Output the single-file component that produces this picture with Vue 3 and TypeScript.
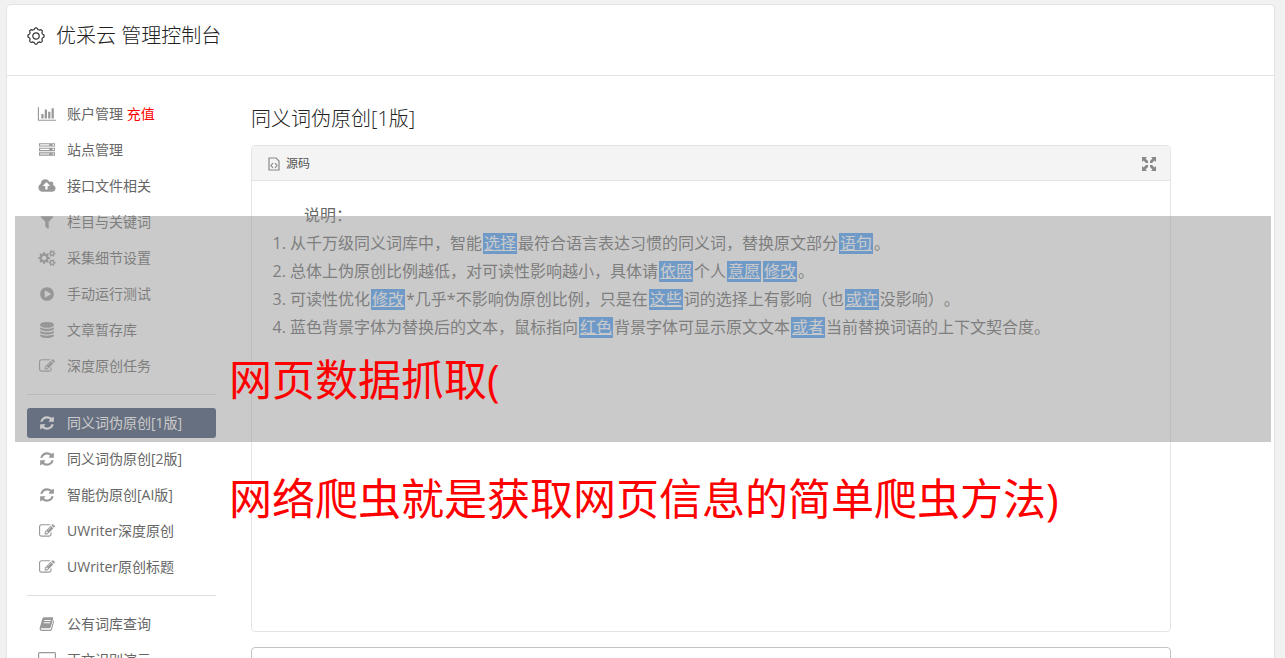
<script setup lang="ts">
interface MenuItem {
  label: string
  extra?: string
  icon: string
  active?: boolean
}
interface Piece {
  text: string
  mark?: boolean
}

const pencil =
  'M888 1184l116-116-152-152-116 116v56h96v96h56zm440-720q-16-16-33 1l-350 350q-17 17-1 33t33-1l350-350q17-17 1-33zm80 594v190q0 119-84.5 203.5t-203.5 84.5h-832q-119 0-203.5-84.5t-84.5-203.5v-832q0-119 84.5-203.5t203.5-84.5h832q63 0 117 25 15 7 18 23 3 17-9 29l-49 49q-14 14-32 8-23-6-45-6h-832q-66 0-113 47t-47 113v832q0 66 47 113t113 47h832q66 0 113-47t47-113v-126q0-13 9-22l64-64q15-15 35-7t20 29zm-96-738l288 288-672 672h-288v-288zm444 132l-92 92-288-288 92-92q28-28 68-28t68 28l152 152q28 28 28 68t-28 68z'

const icons: Record<string, { box: string; path: string }> = {
  chart: {
    box: '0 0 2048 1792',
    path: 'M640 896v512h-256v-512h256zm384-512v1024h-256v-1024h256zm1024 1152v128h-2048v-1536h128v1408h1920zm-640-896v768h-256v-768h256zm384-384v1152h-256v-1152h256z',
  },
  server: {
    box: '0 0 1792 1792',
    path: 'M128 1408h1024v-128h-1024v128zm0-512h1024v-128h-1024v128zm1568 448q0-40-28-68t-68-28-68 28-28 68 28 68 68 28 68-28 28-68zm-1568-960h1024v-128h-1024v128zm1568 448q0-40-28-68t-68-28-68 28-28 68 28 68 68 28 68-28 28-68zm0-512q0-40-28-68t-68-28-68 28-28 68 28 68 68 28 68-28 28-68zm96 832v384h-1792v-384h1792zm0-512v384h-1792v-384h1792zm0-512v384h-1792v-384h1792z',
  },
  cloud: {
    box: '0 0 1920 1792',
    path: 'M1280 864q0-14-9-23l-352-352q-9-9-23-9t-23 9l-351 351q-10 12-10 24 0 14 9 23t23 9h224v352q0 13 9.5 22.5t22.5 9.5h192q13 0 22.5-9.5t9.5-22.5v-352h224q13 0 22.5-9.5t9.5-22.5zm640 288q0 159-112.5 271.5t-271.5 112.5h-1088q-185 0-316.5-131.5t-131.5-316.5q0-130 70-240t188-165q-2-30-2-43 0-212 150-362t362-150q156 0 285.5 87t188.5 231q71-62 166-62 106 0 181 75t75 181q0 76-41 138 130 31 213.5 135.5t83.5 238.5z',
  },
  filter: {
    box: '0 0 1792 1792',
    path: 'M1595 295q17 41-14 70l-493 493v742q0 42-39 59-13 5-25 5-27 0-45-19l-256-256q-19-19-19-45v-486l-493-493q-31-29-14-70 17-39 59-39h1280q42 0 59 39z',
  },
  cogs: {
    box: '0 0 1920 1792',
    path: 'M896 896q0-106-75-181t-181-75-181 75-75 181 75 181 181 75 181-75 75-181zm768 512q0-52-38-90t-90-38-90 38-38 90q0 53 37.5 90.5t90.5 37.5 90.5-37.5 37.5-90.5zm0-1024q0-52-38-90t-90-38-90 38-38 90q0 53 37.5 90.5t90.5 37.5 90.5-37.5 37.5-90.5zm-384 421v185q0 10-7 19.5t-16 10.5l-155 24q-11 35-32 76 34 48 90 115 7 11 7 20 0 12-7 19-23 30-82.5 89.5t-78.5 59.5q-11 0-21-7l-115-90q-37 19-77 31-11 108-23 155-7 24-30 24h-186q-11 0-20-7.5t-10-17.5l-23-153q-34-10-75-31l-118 89q-7 7-20 7-11 0-21-8-144-133-144-160 0-9 7-19 10-14 41-53t47-61q-23-44-35-82l-152-24q-10-1-17-9.5t-7-19.5v-185q0-10 7-19.5t16-10.5l155-24q11-35 32-76-34-48-90-115-7-11-7-20 0-12 7-20 22-30 82-89t79-59q11 0 21 7l115 90q34-18 77-32 11-108 23-154 7-24 30-24h186q11 0 20 7.5t10 17.5l23 153q34 10 75 31l118-89q8-7 20-7 11 0 21 8 144 133 144 160 0 8-7 19-12 16-42 54t-45 60q23 48 34 82l152 23q10 2 17 10.5t7 19.5zm640 533v140q0 16-149 31-12 27-30 52 51 113 51 138 0 4-4 7-122 71-124 71-8 0-46-47t-52-68q-20 2-30 2t-30-2q-14 21-52 68t-46 47q-2 0-124-71-4-3-4-7 0-25 51-138-18-25-30-52-149-15-149-31v-140q0-16 149-31 13-29 30-52-51-113-51-138 0-4 4-7 4-2 35-20t59-34 30-16q8 0 46 46.5t52 67.5q20-2 30-2t30 2q51-71 92-112l6-2q4 0 124 70 4 3 4 7 0 25-51 138 17 23 30 52 149 15 149 31zm0-1024v140q0 16-149 31-12 27-30 52 51 113 51 138 0 4-4 7-122 71-124 71-8 0-46-47t-52-68q-20 2-30 2t-30-2q-14 21-52 68t-46 47q-2 0-124-71-4-3-4-7 0-25 51-138-18-25-30-52-149-15-149-31v-140q0-16 149-31 13-29 30-52-51-113-51-138 0-4 4-7 4-2 35-20t59-34 30-16q8 0 46 46.5t52 67.5q20-2 30-2t30 2q51-71 92-112l6-2q4 0 124 70 4 3 4 7 0 25-51 138 17 23 30 52 149 15 149 31z',
  },
  play: {
    box: '0 0 1792 1792',
    path: 'M896 128q209 0 385.5 103t279.5 279.5 103 385.5-103 385.5-279.5 279.5-385.5 103-385.5-103-279.5-279.5-103-385.5 103-385.5 279.5-279.5 385.5-103zm384 823q32-18 32-55t-32-55l-544-320q-31-19-64-1-32 19-32 56v640q0 37 32 56 16 8 32 8 17 0 32-9z',
  },
  database: {
    box: '0 0 1792 1792',
    path: 'M896 768q237 0 443-43t325-127v170q0 69-103 128t-280 93.5-385 34.5-385-34.5-280-93.5-103-128v-170q119 84 325 127t443 43zm0 768q237 0 443-43t325-127v170q0 69-103 128t-280 93.5-385 34.5-385-34.5-280-93.5-103-128v-170q119 84 325 127t443 43zm0-384q237 0 443-43t325-127v170q0 69-103 128t-280 93.5-385 34.5-385-34.5-280-93.5-103-128v-170q119 84 325 127t443 43zm0-1152q208 0 385 34.5t280 93.5 103 128v128q0 69-103 128t-280 93.5-385 34.5-385-34.5-280-93.5-103-128v-128q0-69 103-128t280-93.5 385-34.5z',
  },
  pencil: { box: '0 0 1792 1792', path: pencil },
  refresh: {
    box: '0 0 1792 1792',
    path: 'M1639 1056q0 5-1 7-64 268-268 434.5t-478 166.5q-146 0-282.5-55t-243.5-157l-129 129q-19 19-45 19t-45-19-19-45v-448q0-26 19-45t45-19h448q26 0 45 19t19 45-19 45l-137 137q71 66 161 102t187 36q134 0 250-65t186-179q11-17 53-117 8-23 30-23h192q13 0 22.5 9.5t9.5 22.5zm25-800v448q0 26-19 45t-45 19h-448q-26 0-45-19t-19-45 19-45l138-138q-148-137-349-137-134 0-250 65t-186 179q-11 17-53 117-8 23-30 23h-199q-13 0-22.5-9.5t-9.5-22.5v-7q65-268 270-434.5t480-166.5q146 0 284 55.5t245 156.5l130-129q19-19 45-19t45 19 19 45z',
  },
  book: {
    box: '0 0 16 16',
    path: 'M5.2 1.2H13.3q1.2 0 .9 1.2L11.8 11q-.4 1.2-1.6 1.2H2.6q-.8 0-.8.6 0 .9 1.3.9H11q.7 0 .9-.6L14.600 4q.8.5.5 1.500L12.900 13.500q-.4 1.500-1.900 1.500H3Q.5 15 .6 12.300L3.300 2.700Q3.700 1.200 5.200 1.200zM5.600 4L5.300 5H11.600L11.900 4zM4.900 6.300L4.600 7.300H10.900L11.200 6.300z',
  },
  laptop: {
    box: '0 0 18 16',
    path: 'M1.500 0H16.500Q18 0 18 1.500V11.500Q18 13 16.500 13H1.500Q0 13 0 11.500V1.500Q0 0 1.500 0zM1.200 1.200V11H16.800V1.200zM5 14H13V16H5z',
  },
}

const groups: MenuItem[][] = [
  [
    { label: '账户管理', extra: '充值', icon: 'chart' },
    { label: '站点管理', icon: 'server' },
    { label: '接口文件相关', icon: 'cloud' },
    { label: '栏目与关键词', icon: 'filter' },
    { label: '采集细节设置', icon: 'cogs' },
    { label: '手动运行测试', icon: 'play' },
    { label: '文章暂存库', icon: 'database' },
    { label: '深度原创任务', icon: 'pencil' },
  ],
  [
    { label: '同义词伪原创[1版]', icon: 'refresh', active: true },
    { label: '同义词伪原创[2版]', icon: 'refresh' },
    { label: '智能伪原创[AI版]', icon: 'refresh' },
    { label: 'UWriter深度原创', icon: 'pencil' },
    { label: 'UWriter原创标题', icon: 'pencil' },
  ],
  [
    { label: '公有词库查询', icon: 'book' },
    { label: '正文识别演示', icon: 'laptop' },
  ],
]

// Words between square brackets are replaced synonyms.
const split = (line: string): Piece[] =>
  line
    .split(/(\[[^\]]+\])/)
    .filter((s) => s !== '')
    .map((s) => (s.startsWith('[') ? { text: s.slice(1, -1), mark: true } : { text: s }))

const notes: Piece[][] = [
  '从千万级同义词库中，智能[选择]最符合语言表达习惯的同义词，替换原文部分[语句]。',
  '总体上伪原创比例越低，对可读性影响越小，具体请[依照]个人[意愿][修改]。',
  '可读性优化[修改]*几乎*不影响伪原创比例，只是在[这些]词的选择上有影响（也[或许]没影响）。',
  '蓝色背景字体为替换后的文本，鼠标指向[红色]背景字体可显示原文文本[或者]当前替换词语的上下文契合度。',
].map(split)

// Scalloped outline of the header gear.
const gear = (() => {
  const pts: string[] = []
  for (let i = 0; i < 96; i++) {
    const a = (i / 96) * Math.PI * 2
    const r = 7.4 + 0.7 * Math.tanh(2 * Math.cos(8 * a))
    pts.push(`${(9 + r * Math.cos(a)).toFixed(2)} ${(9 + r * Math.sin(a)).toFixed(2)}`)
  }
  return `M${pts.join('L')}Z`
})()
</script>

<template>
  <div class="page">
    <div class="card">
      <header class="top">
        <svg class="gear" viewBox="0 0 18 18" aria-hidden="true">
          <path :d="gear" />
          <circle cx="9" cy="9" r="3.2" />
        </svg>
        <h1>优采云 管理控制台</h1>
      </header>

      <div class="columns">
        <nav class="side">
          <ul v-for="(group, g) in groups" :key="g">
            <li v-for="item in group" :key="item.label">
              <a href="#" :class="{ active: item.active }">
                <svg :viewBox="icons[item.icon].box" aria-hidden="true">
                  <path fill-rule="evenodd" :d="icons[item.icon].path" />
                </svg>
                <span>{{ item.label }} <b v-if="item.extra">{{ item.extra }}</b></span>
              </a>
            </li>
          </ul>
        </nav>

        <main class="main">
          <h2>同义词伪原创[1版]</h2>
          <section class="editor">
            <div class="bar">
              <button type="button" class="source">
                <svg viewBox="0 0 12 14" aria-hidden="true">
                  <path d="M1 1H8L11 4V13H1z" />
                  <path d="M5 6L3 8.500L5 11M7 6L9 8.500L7 11" />
                </svg>
                源码
              </button>
              <button type="button" class="expand" aria-label="全屏">
                <svg viewBox="0 0 14 14" aria-hidden="true">
                  <path
                    d="M0 0H5L3.500 1.500L6 4V6H4L1.500 3.500L0 5zM14 0V5L12.500 3.500L10 6H8V4L10.500 1.500L9 0zM0 14V9L1.500 10.500L4 8H6V10L3.500 12.500L5 14zM14 14H9L10.500 12.500L8 10V8H10L12.500 10.500L14 9z"
                  />
                </svg>
              </button>
            </div>
            <div class="body">
              <p>说明：</p>
              <ol>
                <li v-for="(line, i) in notes" :key="i">
                  <template v-for="(piece, j) in line" :key="j"
                    ><u v-if="piece.mark">{{ piece.text }}</u
                    ><template v-else>{{ piece.text }}</template></template
                  >
                </li>
              </ol>
            </div>
          </section>
          <textarea class="result" aria-label="结果"></textarea>
        </main>
      </div>
    </div>

    <div class="shade"></div>
    <div class="caption">
      <p>网页数据抓取(</p>
      <p>网络爬虫就是获取网页信息的简单爬虫方法)</p>
    </div>
  </div>
</template>

<style>
body {
  background: #f1f1f1;
  overflow: hidden;
}
</style>

<style scoped>
.page {
  position: relative;
  padding: 4px 10px 0 6px;
  font-family: "Open Sans", "Noto Sans CJK SC", sans-serif;
  color: #666;
}
.card {
  background: #fff;
  border: 1px solid #e4e4e4;
  border-radius: 5px;
}
.top {
  display: flex;
  align-items: center;
  gap: 11px;
  height: 71px;
  padding: 0 20px 8px;
  box-sizing: border-box;
  border-bottom: 1px solid #e4e4e4;
}
.gear {
  width: 18px;
  height: 18px;
  fill: none;
  stroke: #333;
  stroke-width: 1.2;
}
h1,
h2 {
  margin: 0;
  font-size: 20px;
  line-height: 28px;
  font-weight: 300;
  color: #222;
}
.columns {
  display: flex;
  gap: 35px;
  padding: 23px 20px 20px;
}
.side {
  flex: 0 0 189px;
}
.side ul {
  display: flex;
  flex-direction: column;
  gap: 6px;
  margin: 0;
  padding: 0;
  list-style: none;
}
.side ul + ul {
  margin-top: 13px;
  padding-top: 13px;
  border-top: 1px solid #ddd;
}
.side a {
  display: flex;
  align-items: center;
  gap: 10px;
  height: 30px;
  padding: 0 10px;
  border-radius: 3px;
  font-size: 14px;
  line-height: 20px;
  color: #666;
  text-decoration: none;
  white-space: nowrap;
}
.side svg {
  flex: none;
  width: 20px;
  height: 16px;
  fill: #999;
}
.side b {
  font-weight: 400;
  color: #f00;
}
.side a.active {
  background: #384a6a;
  color: #fff;
}
.side a.active svg {
  fill: #fff;
}
.main {
  flex: 0 1 920px;
  min-width: 0;
  padding-top: 6px;
}
.editor {
  margin-top: 12px;
  border: 1px solid #e4e4e4;
  border-radius: 4px;
}
.bar {
  display: flex;
  align-items: center;
  justify-content: space-between;
  height: 34px;
  padding: 2px 14px 0 16px;
  box-sizing: border-box;
  background: #f4f4f4;
  border-radius: 3px 3px 0 0;
}
button {
  display: flex;
  align-items: center;
  gap: 6px;
  padding: 0;
  border: 0;
  background: none;
  font: 12px/18px "Open Sans", "Noto Sans CJK SC", sans-serif;
  color: #555;
}
.source svg {
  width: 12px;
  height: 14px;
  fill: none;
  stroke: #888;
  stroke-width: 1.2;
}
.expand svg {
  width: 14px;
  height: 14px;
  fill: #888;
}
.body {
  min-height: 410px;
  padding: 20px;
  border-top: 1px solid #e4e4e4;
  font-size: 16px;
  line-height: 28px;
  text-spacing-trim: space-all;
}
.body p {
  margin: 0;
  text-indent: 32px;
}
.body ol {
  margin: 0;
  padding-left: 18px;
}
.body u {
  margin: 0 1px;
  padding: 0 1px;
  display: inline-block;
  height: 21px;
  line-height: 21px;
  color: #fff;
  background: #489efa;
}
.result {
  display: block;
  width: 100%;
  height: 120px;
  margin-top: 15px;
  box-sizing: border-box;
  border: 1px solid #c4c4c4;
  border-radius: 4px;
  resize: none;
}
.shade {
  position: absolute;
  top: 216px;
  left: 15px;
  right: 14px;
  height: 226px;
  background: rgba(150, 150, 150, 0.5);
}
.caption {
  position: absolute;
  top: 350px;
  left: 229px;
  font-size: 43px;
  line-height: 60px;
  color: #f00;
  white-space: nowrap;
}
.caption p {
  margin: 0 0 59px;
}
</style>
